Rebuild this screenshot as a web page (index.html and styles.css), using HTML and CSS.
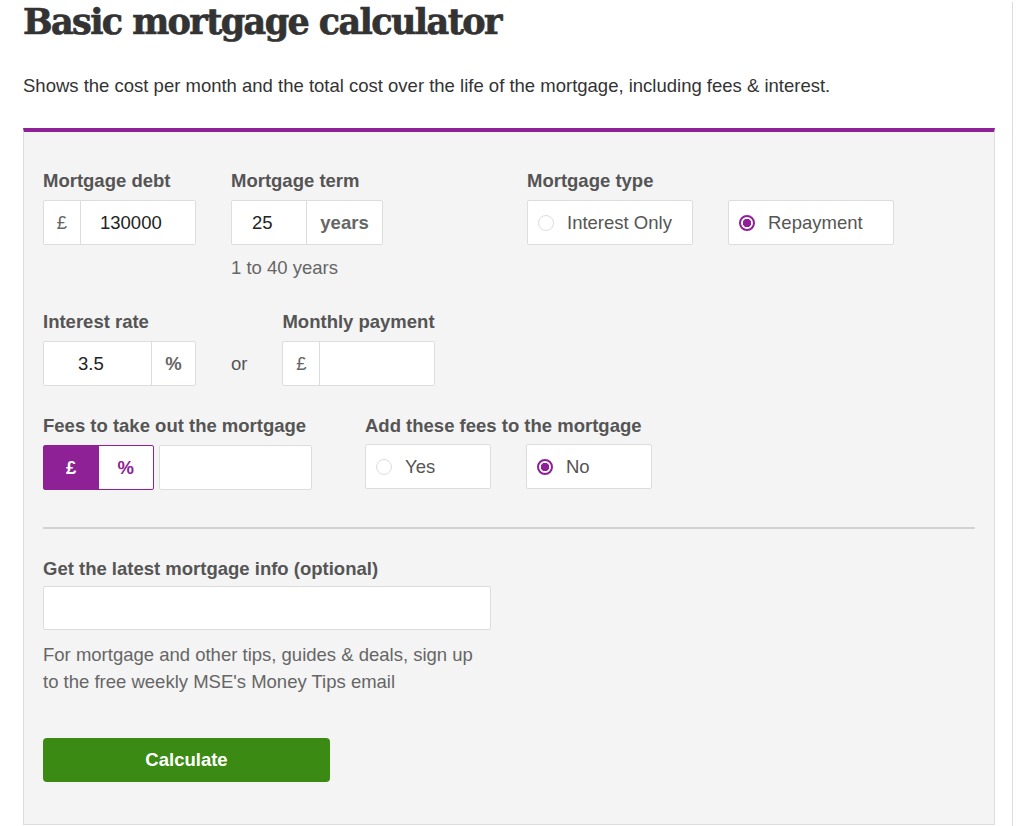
FILE: index.html
```html
<!DOCTYPE html>
<html lang="en">
<head>
    <meta charset="UTF-8"/>
    <title>Basic mortgage calculator</title>
    <link rel="stylesheet" href="styles.css">
</head>
<body>

<div class="pagina">
    <h1>Basic mortgage calculator</h1>
    <p class="intro">Shows the cost per month and the total cost over the life of the mortgage, including fees &amp; interest.</p>

    <form class="calc">
        <!-- fila 1 -->
        <div class="fila">
            <div class="campo campo-debt">
                <label>Mortgage debt</label>
                <div class="grupo">
                    <span class="addon addon-pre">£</span>
                    <input class="input-debt" type="text" value="130000">
                </div>
            </div>
            <div class="campo campo-term">
                <label>Mortgage term</label>
                <div class="grupo">
                    <input class="input-term" type="text" value="25">
                    <span class="addon addon-years">years</span>
                </div>
                <p class="hint">1 to 40 years</p>
            </div>
            <div class="campo campo-type">
                <label>Mortgage type</label>
                <div class="radios">
                    <span class="radio radio-type"><i class="circulo"></i>Interest Only</span>
                    <span class="radio radio-type"><i class="circulo activo"></i>Repayment</span>
                </div>
            </div>
        </div>

        <!-- fila 2 -->
        <div class="fila fila-2">
            <div class="campo campo-rate">
                <label>Interest rate</label>
                <div class="grupo">
                    <input class="input-rate" type="text" value="3.5">
                    <span class="addon addon-pct">%</span>
                </div>
            </div>
            <span class="or">or</span>
            <div class="campo campo-monthly">
                <label>Monthly payment</label>
                <div class="grupo">
                    <span class="addon addon-pre">£</span>
                    <input type="text" value="">
                </div>
            </div>
        </div>

        <!-- fila 3 -->
        <div class="fila fila-3">
            <div class="campo campo-fees">
                <label>Fees to take out the mortgage</label>
                <div class="fees">
                    <div class="toggle">
                        <span class="toggle-btn sel">£</span>
                        <span class="toggle-btn">%</span>
                    </div>
                    <input class="input-fees" type="text" value="">
                </div>
            </div>
            <div class="campo campo-add">
                <label>Add these fees to the mortgage</label>
                <div class="radios radios-add">
                    <span class="radio radio-yn"><i class="circulo"></i>Yes</span>
                    <span class="radio radio-yn"><i class="circulo activo"></i>No</span>
                </div>
            </div>
        </div>

        <hr class="separador">

        <div class="campo campo-email">
            <label>Get the latest mortgage info (optional)</label>
            <input class="input-email" type="text" value="">
            <p class="ayuda">For mortgage and other tips, guides &amp; deals, sign up<br>to the free weekly MSE's Money Tips email</p>
        </div>

        <button type="button" class="btn-calc">Calculate</button>
    </form>
</div>

</body>
</html>
```

FILE: styles.css
```css
/* RESET BASICO */
* {
    margin: 0;
    padding: 0;
    box-sizing: border-box;
}

body {
    font-family: 'Liberation Sans', Arial, sans-serif;
    background: #fff;
    color: #333;
}

.pagina {
    width: 1013px;
    min-height: 826px;
    margin-top: 3px;
    padding: 0 0 0 23px;
    border-right: 1px solid #ddd;
}

h1 {
    font-family: 'DejaVu Serif', Georgia, serif;
    font-weight: 700;
    font-size: 35px;
    line-height: 40px;
    letter-spacing: -1.6px;
    color: #333;
    margin-top: -1px;
    -webkit-text-stroke: 0.7px #333;
}

.intro {
    font-size: 18.5px;
    line-height: 24px;
    color: #333;
    margin-top: 32px;
}

/* Panel */
.calc {
    width: 972px;
    margin-top: 30px;
    background: #f4f4f4;
    border: 1px solid #ddd;
    border-top: 4px solid #8d2195;
    padding: 37px 19px 42px 19px;
}

.fila {
    display: flex;
    align-items: flex-start;
}

.fila-2 {
    margin-top: 30px;
}

.fila-3 {
    margin-top: 28px;
}

label {
    display: block;
    font-weight: 700;
    font-size: 18.5px;
    line-height: 24px;
    color: #555;
    margin-bottom: 7px;
}

.grupo {
    display: flex;
    width: 153px;
    height: 45px;
    background: #fff;
    border: 1px solid #ddd;
    border-radius: 2px;
}

.grupo input,
.input-fees,
.input-email {
    border: none;
    outline: none;
    background: #fff;
    font-family: 'Liberation Sans', Arial, sans-serif;
    font-size: 18.5px;
    color: #222;
    min-width: 0;
    flex: 1;
}

.addon {
    display: flex;
    align-items: center;
    justify-content: center;
    font-size: 18.5px;
    font-weight: 700;
    color: #666;
}

.addon-pre {
    width: 37px;
    border-right: 1px solid #ddd;
    font-weight: 400;
    color: #666;
}

.addon-years {
    width: 76px;
    border-left: 1px solid #ddd;
}

.addon-pct {
    width: 44px;
    border-left: 1px solid #ddd;
}

.input-debt {
    padding-left: 19px;
}

.input-term {
    padding-left: 20px;
}

.input-rate {
    padding-left: 34px;
}

.campo-debt {
    width: 153px;
}

.campo-term {
    margin-left: 35px;
    width: 152px;
}

.campo-term .grupo {
    width: 152px;
}

.hint {
    font-size: 18.5px;
    line-height: 24px;
    color: #666;
    margin-top: 11px;
}

.campo-type {
    margin-left: 144px;
}

.radios {
    display: flex;
    gap: 35px;
}

.radio {
    display: flex;
    align-items: center;
    height: 45px;
    background: #fff;
    border: 1px solid #ddd;
    border-radius: 2px;
    padding-left: 10px;
    font-size: 18.5px;
    color: #555;
    white-space: nowrap;
}

.radio-type {
    width: 166px;
}

.radio-yn {
    width: 126px;
}

.circulo {
    display: inline-block;
    flex: none;
    width: 16px;
    height: 16px;
    border-radius: 50%;
    border: 1px solid #ddd;
    margin-right: 13px;
}

.circulo.activo {
    border: 2px solid #8d2195;
    background: radial-gradient(circle, #8d2195 0 4px, #fff 4.5px);
}

/* fila 2 */
.campo-rate {
    width: 153px;
}

.or {
    margin-left: 35px;
    margin-top: 42px;
    font-size: 18.5px;
    line-height: 24px;
    color: #555;
}

.campo-monthly {
    margin-left: 35px;
}

/* fila 3 */
.fees {
    display: flex;
    gap: 5px;
}

.toggle {
    display: flex;
    width: 111px;
    height: 45px;
    border: 1px solid #8d2195;
    border-radius: 2px;
    background: #fff;
}

.toggle-btn {
    flex: 1;
    display: flex;
    align-items: center;
    justify-content: center;
    font-weight: 700;
    font-size: 18.5px;
    color: #8d2195;
}

.toggle-btn.sel {
    background: #8d2195;
    color: #fff;
}

.input-fees {
    flex: none;
    width: 153px;
    height: 45px;
    border: 1px solid #ddd;
    border-radius: 2px;
}

.campo-add {
    margin-left: 53px;
}

.radios-add {
    margin-top: -1px;
}

.separador {
    border: none;
    border-top: 2px solid #d2d2d2;
    margin-top: 37px;
    margin-bottom: 28px;
}

.input-email {
    display: block;
    width: 448px;
    height: 44px;
    margin-top: -2px;
    border: 1px solid #ddd;
    border-radius: 2px;
}

.ayuda {
    font-size: 18.5px;
    line-height: 27px;
    color: #666;
    margin-top: 11px;
}

.btn-calc {
    display: block;
    margin-top: 43px;
    width: 287px;
    height: 44px;
    background: #3b8a14;
    border: none;
    border-radius: 4px;
    color: #fff;
    font-family: 'Liberation Sans', Arial, sans-serif;
    font-weight: 700;
    font-size: 18.5px;
    cursor: pointer;
}
```
